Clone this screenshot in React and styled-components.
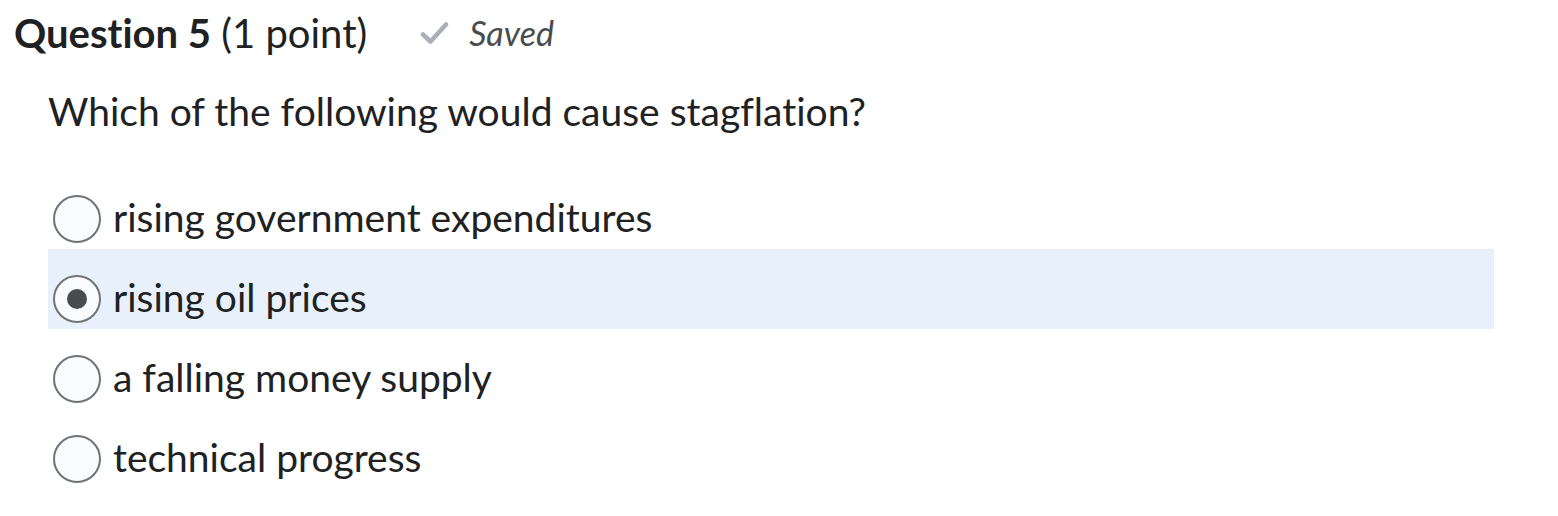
import React from "react";
import styled, { createGlobalStyle } from "styled-components";

const Global = createGlobalStyle`
  html, body { margin: 0; padding: 0; background: #ffffff; }
  body {
    font-family: Lato, "Open Sans", sans-serif;
    color: #202122;
    font-variant-ligatures: none;
    font-feature-settings: "liga" 0, "clig" 0;
  }
`;

const Page = styled.div`
  width: 1558px;
  height: 516px;
  box-sizing: border-box;
  padding: 10px 0 0 14px;
`;

const Header = styled.div`
  display: flex;
  align-items: center;
  height: 46px;
`;

const Title = styled.h2`
  margin: 0;
  font-size: 40px;
  font-weight: 400;
  color: #202122;
  line-height: 46px;
  & > strong { font-weight: 700; }
`;

const SavedStatus = styled.div`
  display: flex;
  align-items: center;
  margin-left: 53px;
  gap: 20px;
  font-style: italic;
  font-size: 34px;
  line-height: 46px;
  color: #494c4e;
`;

const Question = styled.p`
  margin: 32px 0 0 34px;
  font-size: 39px;
  line-height: 46px;
  color: #202122;
`;

const Options = styled.div`
  margin: 35px 0 0 34px;
  width: 1446px;
  display: flex;
  flex-direction: column;
`;

const Option = styled.label`
  display: flex;
  align-items: center;
  box-sizing: border-box;
  height: 80px;
  padding: 16px 0 0 5px;
  gap: 12px;
  background: ${p => (p.$selected ? "#e8f1fb" : "transparent")};
  font-size: 39px;
  line-height: 46px;
  color: #202122;
`;

const Radio = styled.span`
  width: 44px;
  height: 44px;
  border-radius: 50%;
  border: 2px solid #6e7376;
  background: #f9fbff;
  display: flex;
  align-items: center;
  justify-content: center;
  flex-shrink: 0;
  margin-top: 4px;
  &::after {
    content: "";
    display: ${p => (p.$checked ? "block" : "none")};
    width: 20px;
    height: 20px;
    border-radius: 50%;
    background: #494c4e;
  }
`;

const items = [
  "rising government expenditures",
  "rising oil prices",
  "a falling money supply",
  "technical progress",
];

export default function App() {
  return (
    <Page>
      <Global />
      <Header>
        <Title>
          <strong>Question 5</strong> (1 point)
        </Title>
        <SavedStatus>
          <svg width="29" height="24" viewBox="0 0 29 24" fill="none">
            <path d="M3 13.5 L10.5 20.5 L26 3.5" stroke="#aab0b5" strokeWidth="4.5" strokeLinecap="round" strokeLinejoin="round" />
          </svg>
          Saved
        </SavedStatus>
      </Header>
      <Question>Which of the following would cause stagflation?</Question>
      <Options>
        {items.map((t, i) => (
          <Option key={t} $selected={i === 1}>
            <Radio $checked={i === 1} />
            {t}
          </Option>
        ))}
      </Options>
    </Page>
  );
}
